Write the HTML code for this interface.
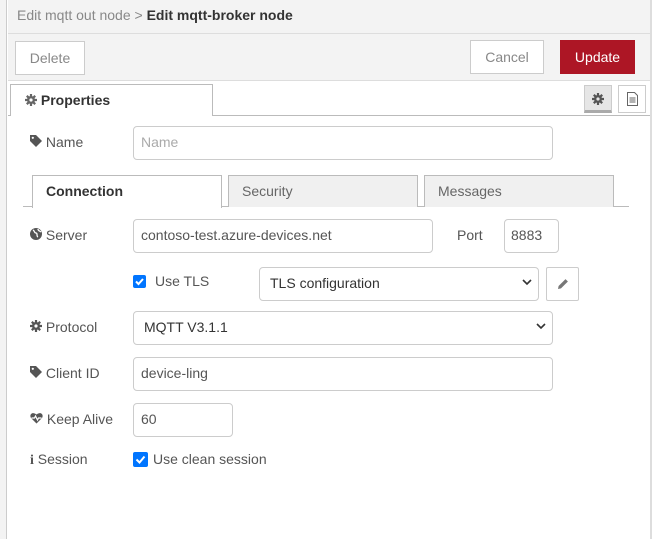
<!DOCTYPE html>
<html><head><style>
*{box-sizing:border-box}
body{margin:0;width:652px;height:539px;overflow:hidden;font-family:"Liberation Sans",Arial,sans-serif;font-size:14px;color:#555;background:#fff;position:relative}
.a{position:absolute}
.lb{position:absolute;left:30px;font-size:14px;color:#555;line-height:16px}
.in{position:absolute;border:1px solid #ccc;border-radius:4px;background:#fff;padding-left:7px;line-height:31px;color:#555;font-size:14px}
.btn{position:absolute;border:1px solid #ccc;background:#fff;color:#888;text-align:center;font-size:14px}
.tab{position:absolute;top:175px;height:32px;border:1px solid #bbb;border-bottom:none;padding-left:13px;line-height:30px;font-size:14px;color:#666;background:#f0f0f0}
.chev{position:absolute;right:6px;top:11px}
.cb{position:absolute;width:13px;height:13px;background:#0075ff;border-radius:2px}
</style></head><body>
<div class="a" style="left:0;top:0;width:7px;height:539px;background:#f3f3f3;border-right:1px solid #ccc"></div>
<div class="a" style="left:650px;top:0;width:2px;height:539px;background:#ddd"></div>
<div class="a" style="left:8px;top:0;width:642px;height:80px;background:#f3f3f3"></div>
<div class="a" style="left:8px;top:33px;width:642px;height:1px;background:#ddd"></div>
<div class="a" style="left:17px;top:7px;font-size:14px;color:#888">Edit mqtt out node &gt; <b style="color:#333">Edit mqtt-broker node</b></div>
<div class="btn" style="left:15px;top:41px;width:70px;height:34px;line-height:32px">Delete</div>
<div class="btn" style="left:470px;top:40px;width:74px;height:34px;line-height:32px">Cancel</div>
<div class="btn" style="left:560px;top:40px;width:75px;height:34px;line-height:33px;background:#ad1625;border-color:#ad1625;color:#fff">Update</div>
<div class="a" style="left:8px;top:80px;width:642px;height:1px;background:#ddd"></div>
<div class="a" style="left:8px;top:115px;width:642px;height:1px;background:#bbb"></div>
<div class="a" style="left:10px;top:84px;width:203px;height:32px;background:#fff;border:1px solid #bbb;border-bottom:none;line-height:30px;padding-left:14px;color:#333;font-weight:bold">
<svg width="12" height="12" viewBox="0 0 12 12" style="vertical-align:-1px"><circle cx="6" cy="6" r="4" fill="#666"/><g stroke="#666" stroke-width="2.2"><path d="M6 0v12M0 6h12M1.8 1.8l8.4 8.4M10.2 1.8l-8.4 8.4"/></g><circle cx="6" cy="6" r="1.6" fill="#fff"/></svg> Properties</div>
<div class="a" style="left:584px;top:85px;width:28px;height:28px;background:#e6e6e6;border:1px solid #ccc;border-bottom:3px solid #aaa;text-align:center;padding-top:6px">
<svg width="12" height="12" viewBox="0 0 12 12"><circle cx="6" cy="6" r="4" fill="#555"/><g stroke="#555" stroke-width="2.2"><path d="M6 0v12M0 6h12M1.8 1.8l8.4 8.4M10.2 1.8l-8.4 8.4"/></g><circle cx="6" cy="6" r="1.6" fill="#e6e6e6"/></svg></div>
<div class="a" style="left:618px;top:85px;width:28px;height:28px;background:#fff;border:1px solid #ccc;text-align:center;padding-top:6px">
<svg width="11" height="14" viewBox="0 0 11 14"><path d="M.5.5h7l3 3v10h-10z" fill="none" stroke="#666"/><path d="M2.5 6h6M2.5 8h6M2.5 10h6" stroke="#666"/></svg></div>

<div class="lb" style="top:134px"><svg width="12" height="12" viewBox="0 0 12 12"><path d="M0 0h6l6 6-6 6-6-6z" fill="#555"/><circle cx="2.8" cy="2.8" r="1.1" fill="#fff"/></svg> Name</div>
<div class="in" style="left:133px;top:126px;width:420px;height:34px;color:#aaa">Name</div>

<div class="a" style="left:23px;top:206px;width:606px;height:1px;background:#bbb"></div>
<div class="tab" style="left:32px;width:190px;background:#fff;color:#333;font-weight:bold;height:33px">Connection</div>
<div class="tab" style="left:228px;width:190px">Security</div>
<div class="tab" style="left:424px;width:190px">Messages</div>

<div class="lb" style="top:227px"><svg width="12" height="12" viewBox="0 0 12 12"><circle cx="6" cy="6" r="6" fill="#555"/><path d="M3 2c2 1 1 3 3 3s0 3 2 4M8 1c0 2 2 2 3 3" stroke="#fff" fill="none" stroke-width="1.3"/></svg> Server</div>
<div class="in" style="left:133px;top:219px;width:300px;height:34px">contoso-test.azure-devices.net</div>
<div class="a" style="left:457px;top:227px">Port</div>
<div class="in" style="left:504px;top:219px;width:55px;height:34px;padding-left:6px">8883</div>

<div class="cb" style="left:133px;top:275px"><svg width="13" height="13" viewBox="0 0 13 13"><path d="M3 6.5l2.5 2.5 4.5-5" stroke="#fff" stroke-width="2" fill="none"/></svg></div>
<div class="a" style="left:155px;top:273px">Use TLS</div>
<div class="in" style="left:259px;top:267px;width:280px;height:34px;color:#333;padding-left:10px">TLS configuration<svg class="chev" width="10" height="7" viewBox="0 0 10 7"><path d="M1 1l4 4 4-4" stroke="#333" stroke-width="1.6" fill="none"/></svg></div>
<div class="a" style="left:546px;top:267px;width:33px;height:34px;border:1px solid #ccc;border-radius:2px;background:#fff">
<svg class="a" style="left:10px;top:10px" width="12" height="12" viewBox="0 0 12 12"><path d="M1 11l.6-3L8.5 1.1l2.4 2.4L4 10.4z" fill="#777"/></svg></div>

<div class="lb" style="top:319px"><svg width="12" height="12" viewBox="0 0 12 12"><circle cx="6" cy="6" r="4" fill="#555"/><g stroke="#555" stroke-width="2.2"><path d="M6 0v12M0 6h12M1.8 1.8l8.4 8.4M10.2 1.8l-8.4 8.4"/></g><circle cx="6" cy="6" r="1.6" fill="#fff"/></svg> Protocol</div>
<div class="in" style="left:133px;top:311px;width:420px;height:34px;color:#333;padding-left:10px">MQTT V3.1.1<svg class="chev" width="10" height="7" viewBox="0 0 10 7"><path d="M1 1l4 4 4-4" stroke="#333" stroke-width="1.6" fill="none"/></svg></div>

<div class="lb" style="top:365px"><svg width="12" height="12" viewBox="0 0 12 12"><path d="M0 0h6l6 6-6 6-6-6z" fill="#555"/><circle cx="2.8" cy="2.8" r="1.1" fill="#fff"/></svg> Client ID</div>
<div class="in" style="left:133px;top:357px;width:420px;height:34px">device-ling</div>

<div class="lb" style="top:411px"><svg width="13" height="12" viewBox="0 0 13 12"><path d="M6.5 11.5L1 6C-1 3 2-1 6.5 2.5 11-1 14 3 12 6z" fill="#555"/><path d="M1.5 6h3l1-2 2 4 1-2h3" stroke="#fff" fill="none" stroke-width="1.2"/></svg> Keep Alive</div>
<div class="in" style="left:133px;top:403px;width:100px;height:34px">60</div>

<div class="lb" style="top:451px"><b style="font-family:'Liberation Serif',serif;color:#555">i</b> Session</div>
<div class="cb" style="left:133px;top:452px;width:15px;height:15px"><svg width="15" height="15" viewBox="0 0 15 15"><path d="M3.5 7.5l3 3 5-6" stroke="#fff" stroke-width="2" fill="none"/></svg></div>
<div class="a" style="left:153px;top:451px">Use clean session</div>
</body></html>
